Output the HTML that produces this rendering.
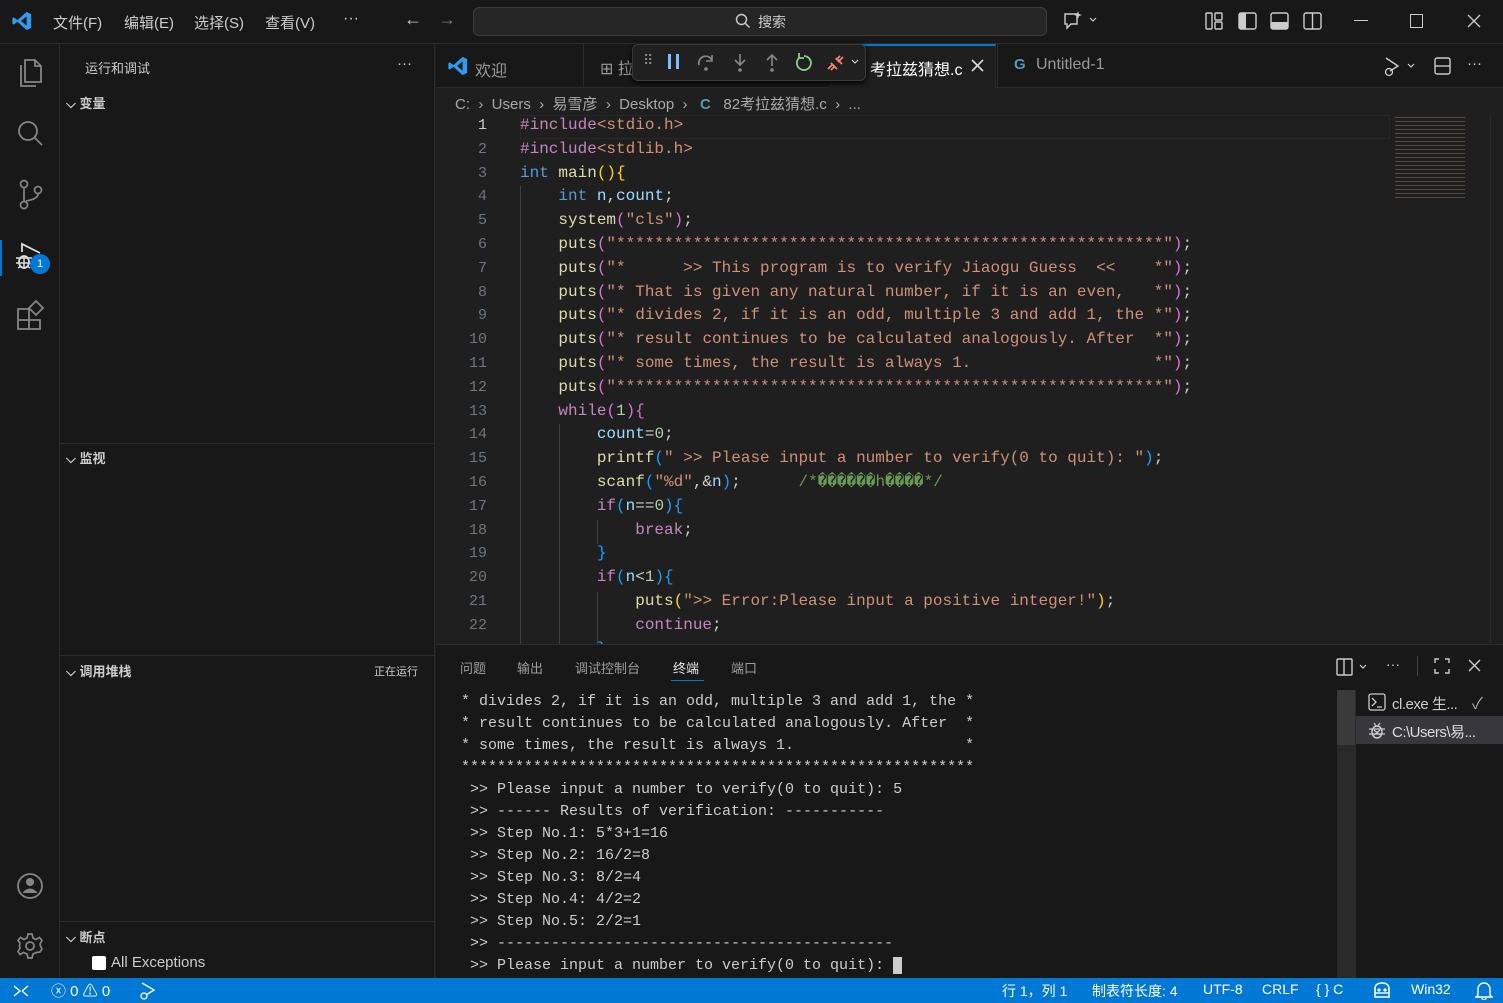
<!DOCTYPE html>
<html><head><meta charset="utf-8"><style>
*{margin:0;padding:0;box-sizing:border-box}
html,body{width:1503px;height:1003px;overflow:hidden}
body{background:#1f1f1f;position:relative;font-family:"Liberation Sans","Noto Sans CJK SC",sans-serif;color:#ccc;font-size:14px}
.a{position:absolute}
.mono{font-family:"Liberation Mono","Noto Sans CJK SC",monospace}
.mono div{white-space:pre}
.code div{height:23.8px;line-height:23.8px;font-size:16px}
.ln div{height:23.8px;line-height:23.8px;font-size:15px;text-align:right;color:#6e7681}
.k{color:#569cd6}.f{color:#dcdcaa}.s{color:#ce9178}.n{color:#b5cea8}.c{color:#c586c0}.v{color:#9cdcfe}.cm{color:#6a9955}.b1{color:#ffd700}.b2{color:#da70d6}.b3{color:#179fff}
.term div{height:22px;line-height:22px;font-size:15px;color:#ccc}
svg{position:absolute}
</style></head><body>
<!-- title bar -->
<div class="a" style="left:0;top:0;width:1503px;height:44px;background:#181818;border-bottom:1px solid #2b2b2b"></div>
<svg style="left:11px;top:10px" width="22" height="22" viewBox="0 0 24 24"><path d="M17 2 L22 4.5 V19.5 L17 22 L7 13 L3 16 L1.5 15 V9 L3 8 L7 11 Z M17 7 L11 12 L17 17 Z" fill="#2f9af0"/></svg>
<div class="a" style="left:53px;top:12px;font-size:15px">文件(F)</div>
<div class="a" style="left:124px;top:12px;font-size:15px">编辑(E)</div>
<div class="a" style="left:194px;top:12px;font-size:15px">选择(S)</div>
<div class="a" style="left:265px;top:12px;font-size:15px">查看(V)</div>
<div class="a" style="left:343px;top:10px;font-size:16px">···</div>
<div class="a" style="left:404px;top:9px;font-size:18px;color:#ccc">←</div>
<div class="a" style="left:438px;top:9px;font-size:18px;color:#777">→</div>
<div class="a" style="left:473px;top:7px;width:574px;height:29px;background:#262626;border:1px solid #3c3c3c;border-radius:6px"></div>
<svg style="left:735px;top:13px" width="16" height="16" viewBox="0 0 16 16"><circle cx="6.5" cy="6.5" r="5" stroke="#ccc" stroke-width="1.4" fill="none"/><path d="M10 10 L14.5 14.5" stroke="#ccc" stroke-width="1.4"/></svg>
<div class="a" style="left:758px;top:12px;font-size:14px">搜索</div>
<svg style="left:1062px;top:10px" width="40" height="22" viewBox="0 0 40 22"><path d="M3 4 H15 V14 H9 L5 18 V14 H3 Z" stroke="#ccc" stroke-width="1.4" fill="none"/><path d="M16 1 L17 4 L20 5 L17 6 L16 9 L15 6 L12 5 L15 4Z" fill="#ccc"/><path d="M28 8 L31 11 L34 8" stroke="#ccc" stroke-width="1.2" fill="none"/></svg>
<svg style="left:1205px;top:12px" width="120" height="20" viewBox="0 0 120 20"><rect x="1" y="1" width="6" height="16" rx="1" stroke="#ccc" fill="none" stroke-width="1.4"/><rect x="10" y="1" width="7" height="7" rx="1" stroke="#ccc" fill="none" stroke-width="1.4"/><rect x="10" y="10" width="7" height="7" rx="1" stroke="#ccc" fill="none" stroke-width="1.4"/><rect x="34" y="1" width="17" height="16" rx="2" stroke="#ccc" fill="none" stroke-width="1.4"/><rect x="34" y="1" width="7" height="16" fill="#ccc"/><rect x="66" y="1" width="17" height="16" rx="2" stroke="#ccc" fill="none" stroke-width="1.4"/><rect x="66" y="10" width="17" height="7" fill="#ccc"/><rect x="99" y="1" width="17" height="16" rx="2" stroke="#ccc" fill="none" stroke-width="1.4"/><path d="M107.5 1 V17" stroke="#ccc" stroke-width="1.4"/></svg>
<div class="a" style="left:1354px;top:20px;width:14px;height:1px;background:#ccc"></div>
<div class="a" style="left:1410px;top:14px;width:13px;height:14px;border:1px solid #ccc"></div>
<svg style="left:1467px;top:14px" width="14" height="14"><path d="M1 1 L13 13 M13 1 L1 13" stroke="#ccc" stroke-width="1.3"/></svg>

<!-- activity bar -->
<div class="a" style="left:0;top:44px;width:60px;height:934px;background:#181818;border-right:1px solid #2b2b2b"></div>
<svg style="left:16px;top:57px" width="28" height="32" viewBox="0 0 28 32"><path d="M9 3 H19 L25 9 V25 H9 Z M19 3 V9 H25" stroke="#858585" stroke-width="1.8" fill="none"/><path d="M5 8 V29 H20" stroke="#858585" stroke-width="1.8" fill="none"/></svg>
<svg style="left:16px;top:119px" width="28" height="30" viewBox="0 0 28 30"><circle cx="12" cy="12" r="9" stroke="#858585" stroke-width="1.8" fill="none"/><path d="M18.5 18.5 L26 26" stroke="#858585" stroke-width="1.8"/></svg>
<svg style="left:16px;top:179px" width="28" height="32" viewBox="0 0 28 32"><circle cx="8" cy="5" r="3.5" stroke="#858585" stroke-width="1.7" fill="none"/><circle cx="8" cy="26" r="3.5" stroke="#858585" stroke-width="1.7" fill="none"/><circle cx="22" cy="11" r="3.5" stroke="#858585" stroke-width="1.7" fill="none"/><path d="M8 9 V22 M22 15 Q22 20 10 22" stroke="#858585" stroke-width="1.7" fill="none"/></svg>
<div class="a" style="left:0;top:240px;width:2px;height:36px;background:#0078d4"></div>
<svg style="left:13px;top:241px" width="34" height="30" viewBox="0 0 34 30"><path d="M9 11 V3 L27 12" stroke="#ddd" stroke-width="1.8" fill="none"/><ellipse cx="11" cy="21" rx="5" ry="6" stroke="#ddd" stroke-width="1.8" fill="none"/><path d="M3 17 H19 M3 22 H19 M5 27 L8 25 M17 27 L14 25 M11 15 V27" stroke="#ddd" stroke-width="1.5"/></svg>
<div class="a" style="left:30px;top:254px;width:20px;height:20px;border-radius:50%;background:#0078d4;color:#fff;font-size:11px;text-align:center;line-height:20px">1</div>
<svg style="left:16px;top:298px" width="30" height="32" viewBox="0 0 30 32"><path d="M2 11 H13 V22 H2 Z M2 22 H13 V31 H2 Z M13 22 H24 V31 H13 Z" stroke="#858585" stroke-width="1.8" fill="none"/><path d="M20 3 L27 10 L20 17 L13 10 Z" stroke="#858585" stroke-width="1.8" fill="none"/></svg>
<svg style="left:16px;top:872px" width="28" height="28" viewBox="0 0 28 28"><circle cx="14" cy="14" r="12" stroke="#858585" stroke-width="1.8" fill="none"/><circle cx="14" cy="10" r="4" fill="#858585"/><path d="M7 20 Q14 13 21 20 V21 H7 Z" fill="#858585"/></svg>
<svg style="left:16px;top:932px" width="28" height="28" viewBox="0 0 28 28"><circle cx="14" cy="14" r="4" stroke="#858585" stroke-width="1.8" fill="none"/><path d="M12 2 H16 L17 6 L20 7.5 L23.5 5.5 L26 8.5 L24 12 L24.5 14 L26 17 L24 20 L20.5 20.5 L17 22 L16 26 H12 L11 22 L7.5 20.5 L4 22.5 L2 19.5 L4 16 L3.5 14 L4 11 L2 8.5 L4.5 5.5 L8 7.5 L11 6 Z" stroke="#858585" stroke-width="1.7" fill="none"/></svg>

<!-- sidebar -->
<div class="a" style="left:60px;top:44px;width:375px;height:934px;background:#181818;border-right:1px solid #2b2b2b"></div>
<div class="a" style="left:85px;top:58px;font-size:13px;color:#ccc">运行和调试</div>
<div class="a" style="left:397px;top:55px;font-size:15px">···</div>
<div class="a" style="left:66px;top:93px;font-size:13px;font-weight:bold;color:#ccc">⌵ 变量</div>
<div class="a" style="left:60px;top:443px;width:375px;height:1px;background:#2b2b2b"></div>
<div class="a" style="left:66px;top:448px;font-size:13px;font-weight:bold">⌵ 监视</div>
<div class="a" style="left:60px;top:655px;width:375px;height:1px;background:#2b2b2b"></div>
<div class="a" style="left:66px;top:661px;font-size:13px;font-weight:bold">⌵ 调用堆栈</div>
<div class="a" style="left:374px;top:663px;font-size:11px;color:#ccc">正在运行</div>
<div class="a" style="left:60px;top:921px;width:375px;height:1px;background:#2b2b2b"></div>
<div class="a" style="left:66px;top:927px;font-size:13px;font-weight:bold">⌵ 断点</div>
<div class="a" style="left:92px;top:956px;width:14px;height:14px;background:#fff;border-radius:2px"></div>
<div class="a" style="left:111px;top:954px;font-size:15px;color:#ccc">All Exceptions</div>

<!-- tabs -->
<div class="a" style="left:436px;top:44px;width:1067px;height:44px;background:#181818;border-bottom:1px solid #2b2b2b"></div>
<div class="a" style="left:436px;top:44px;width:148px;height:43px;border-right:1px solid #2b2b2b"></div>
<svg style="left:447px;top:55px" width="22" height="22" viewBox="0 0 24 24"><path d="M17 2 L22 4.5 V19.5 L17 22 L7 13 L3 16 L1.5 15 V9 L3 8 L7 11 Z M17 7 L11 12 L17 17 Z" fill="#2f9af0"/></svg>
<div class="a" style="left:475px;top:57px;font-size:16px;color:#999">欢迎</div>
<div class="a" style="left:600px;top:55px;font-size:16px;color:#999">⊞ 拉</div>
<div class="a" style="left:830px;top:44px;width:166px;height:44px;background:#1f1f1f;border-top:2px solid #0078d4;border-right:1px solid #2b2b2b"></div>
<div class="a" style="left:870px;top:56px;font-size:16px;color:#fff">考拉兹猜想.c</div>
<svg style="left:971px;top:59px" width="13" height="13"><path d="M1 1 L12 12 M12 1 L1 12" stroke="#ddd" stroke-width="1.6"/></svg>
<div class="a" style="left:1014px;top:56px;font-size:15px;color:#519aba;font-weight:bold">G</div>
<div class="a" style="left:1036px;top:56px;font-size:16px;color:#999">Untitled-1</div>
<div class="a" style="left:997px;top:44px;width:1px;height:44px;background:#2b2b2b"></div>
<svg style="left:1382px;top:56px" width="40" height="22" viewBox="0 0 40 22"><path d="M4 2 L16 10 L8 15" stroke="#ccc" stroke-width="1.4" fill="none"/><circle cx="7" cy="16" r="3.5" stroke="#ccc" stroke-width="1.3" fill="none"/><path d="M26 8 L29 11 L32 8" stroke="#ccc" stroke-width="1.2" fill="none"/></svg>
<svg style="left:1433px;top:56px" width="20" height="20"><rect x="2" y="2" width="15" height="16" rx="2" stroke="#ccc" stroke-width="1.4" fill="none"/><path d="M2 10 H17" stroke="#ccc" stroke-width="1.4"/></svg>
<div class="a" style="left:1467px;top:55px;font-size:15px">···</div>
<!-- debug toolbar -->
<div class="a" style="left:632px;top:44px;width:234px;height:37px;background:#202020;border:1px solid #3c3c3c;border-radius:6px;box-shadow:0 2px 6px #000"></div>
<div class="a" style="left:643px;top:52px;font-size:14px;color:#888">⠿</div>
<div class="a" style="left:668px;top:54px;width:3px;height:15px;background:#75beff"></div>
<div class="a" style="left:676px;top:54px;width:3px;height:15px;background:#75beff"></div>
<svg style="left:696px;top:52px" width="22" height="22"><path d="M3 13 A7 7 0 0 1 16 8 M16 3 V9 H10" stroke="#888" stroke-width="1.6" fill="none"/><circle cx="10" cy="17" r="1.8" fill="#888"/></svg>
<svg style="left:730px;top:52px" width="20" height="22"><path d="M10 2 V13 M5 8 L10 13 L15 8" stroke="#888" stroke-width="1.6" fill="none"/><circle cx="10" cy="18" r="1.8" fill="#888"/></svg>
<svg style="left:762px;top:52px" width="20" height="22"><path d="M10 14 V3 M5 8 L10 3 L15 8" stroke="#888" stroke-width="1.6" fill="none"/><circle cx="10" cy="18" r="1.8" fill="#888"/></svg>
<svg style="left:793px;top:52px" width="22" height="22"><path d="M6 6 A7 7 0 1 0 11 4 M6 1 V6 H11" stroke="#89d185" stroke-width="1.8" fill="none"/></svg>
<svg style="left:825px;top:52px" width="40" height="22"><path d="M3 17 L8 12 M10 14 L6 18 M13 10 L18 5 M11 8 L15 4" stroke="#f48771" stroke-width="1.7" fill="none"/><path d="M6 11 L12 17 M11 6 L17 12" stroke="#f48771" stroke-width="1.7"/><path d="M27 8 L30 11 L33 8" stroke="#ccc" stroke-width="1.2" fill="none"/></svg>

<!-- breadcrumb -->
<div class="a" style="left:455px;top:93px;font-size:15px;color:#a9a9a9;white-space:pre">C:  ›  Users  ›  易雪彦  ›  Desktop  ›   <b style="color:#519aba">C</b>   82考拉兹猜想.c  ›  ...</div>

<!-- code -->
<div class="a" style="left:520px;top:115px;width:870px;height:24px;border:1px solid #282828"></div>
<div class="a ln mono" style="left:455px;top:114px;width:32px"><div style="color:#ccc">1</div><div>2</div><div>3</div><div>4</div><div>5</div><div>6</div><div>7</div><div>8</div><div>9</div><div>10</div><div>11</div><div>12</div><div>13</div><div>14</div><div>15</div><div>16</div><div>17</div><div>18</div><div>19</div><div>20</div><div>21</div><div>22</div></div>
<div class="a" style="left:520px;top:186px;width:1px;height:458px;background:#404040"></div>
<div class="a" style="left:559px;top:424px;width:1px;height:220px;background:#404040"></div>
<div class="a" style="left:597px;top:520px;width:1px;height:24px;background:#404040"></div>
<div class="a" style="left:597px;top:592px;width:1px;height:52px;background:#404040"></div>
<div class="a code mono" style="left:520px;top:114px;color:#ccc;height:530px;overflow:hidden;width:870px"><div><span class="c">#include</span><span class="s">&lt;stdio.h&gt;</span></div><div><span class="c">#include</span><span class="s">&lt;stdlib.h&gt;</span></div><div><span class="k">int</span> <span class="f">main</span><span class="b1">(){</span></div><div>    <span class="k">int</span> <span class="v">n</span>,<span class="v">count</span>;</div><div>    <span class="f">system</span><span class="b2">(</span><span class="s">"cls"</span><span class="b2">)</span>;</div><div>    <span class="f">puts</span><span class="b2">(</span><span class="s">"*********************************************************"</span><span class="b2">)</span>;</div><div>    <span class="f">puts</span><span class="b2">(</span><span class="s">"*      &gt;&gt; This program is to verify Jiaogu Guess  &lt;&lt;    *"</span><span class="b2">)</span>;</div><div>    <span class="f">puts</span><span class="b2">(</span><span class="s">"* That is given any natural number, if it is an even,   *"</span><span class="b2">)</span>;</div><div>    <span class="f">puts</span><span class="b2">(</span><span class="s">"* divides 2, if it is an odd, multiple 3 and add 1, the *"</span><span class="b2">)</span>;</div><div>    <span class="f">puts</span><span class="b2">(</span><span class="s">"* result continues to be calculated analogously. After  *"</span><span class="b2">)</span>;</div><div>    <span class="f">puts</span><span class="b2">(</span><span class="s">"* some times, the result is always 1.                   *"</span><span class="b2">)</span>;</div><div>    <span class="f">puts</span><span class="b2">(</span><span class="s">"*********************************************************"</span><span class="b2">)</span>;</div><div>    <span class="c">while</span><span class="b2">(</span><span class="n">1</span><span class="b2">){</span></div><div>        <span class="v">count</span>=<span class="n">0</span>;</div><div>        <span class="f">printf</span><span class="b3">(</span><span class="s">" &gt;&gt; Please input a number to verify(0 to quit): "</span><span class="b3">)</span>;</div><div>        <span class="f">scanf</span><span class="b3">(</span><span class="s">"%d"</span>,&amp;<span class="v">n</span><span class="b3">)</span>;      <span class="cm">/*������h����*/</span></div><div>        <span class="c">if</span><span class="b3">(</span><span class="v">n</span>==<span class="n">0</span><span class="b3">){</span></div><div>            <span class="c">break</span>;</div><div>        <span class="b3">}</span></div><div>        <span class="c">if</span><span class="b3">(</span><span class="v">n</span>&lt;<span class="n">1</span><span class="b3">){</span></div><div>            <span class="f">puts</span><span class="b1">(</span><span class="s">"&gt;&gt; Error:Please input a positive integer!"</span><span class="b1">)</span>;</div><div>            <span class="c">continue</span>;</div><div>        <span class="b3">}</span></div></div>
<!-- minimap -->
<div class="a" style="left:1395px;top:115px;width:70px;height:85px;opacity:.5;background:repeating-linear-gradient(#1f1f1f 0 2px,#8a7a6a 2px 3px,#1f1f1f 3px 4px)"></div>
<div class="a" style="left:1490px;top:115px;width:13px;height:528px;border-left:1px solid #2b2b2b"></div>

<!-- panel -->
<div class="a" style="left:436px;top:644px;width:1067px;height:334px;background:#181818;border-top:1px solid #2b2b2b"></div>
<div class="a" style="left:460px;top:658px;font-size:13px;color:#9d9d9d">问题</div>
<div class="a" style="left:517px;top:658px;font-size:13px;color:#9d9d9d">输出</div>
<div class="a" style="left:575px;top:658px;font-size:13px;color:#9d9d9d">调试控制台</div>
<div class="a" style="left:673px;top:658px;font-size:13px;color:#e7e7e7">终端</div>
<div class="a" style="left:671px;top:680px;width:33px;height:1px;background:#0078d4"></div>
<div class="a" style="left:731px;top:658px;font-size:13px;color:#9d9d9d">端口</div>
<svg style="left:1335px;top:657px" width="40" height="20"><rect x="2" y="2" width="15" height="16" rx="1" stroke="#ccc" stroke-width="1.4" fill="none"/><path d="M9 2 V18" stroke="#ccc" stroke-width="1.4"/><path d="M25 8 L28 11 L31 8" stroke="#ccc" stroke-width="1.2" fill="none"/></svg>
<div class="a" style="left:1386px;top:656px;font-size:14px">···</div>
<div class="a" style="left:1417px;top:656px;width:1px;height:20px;background:#444"></div>
<svg style="left:1434px;top:658px" width="16" height="16"><path d="M1 5 V1 H5 M11 1 H15 V5 M15 11 V15 H11 M5 15 H1 V11" stroke="#ccc" stroke-width="1.4" fill="none"/></svg>
<svg style="left:1468px;top:659px" width="13" height="13"><path d="M1 1 L12 12 M12 1 L1 12" stroke="#ccc" stroke-width="1.4"/></svg>
<div class="a term mono" style="left:461px;top:691px"><div>* divides 2, if it is an odd, multiple 3 and add 1, the *</div><div>* result continues to be calculated analogously. After  *</div><div>* some times, the result is always 1.                   *</div><div>*********************************************************</div><div> &gt;&gt; Please input a number to verify(0 to quit): 5</div><div> &gt;&gt; ------ Results of verification: -----------</div><div> &gt;&gt; Step No.1: 5*3+1=16</div><div> &gt;&gt; Step No.2: 16/2=8</div><div> &gt;&gt; Step No.3: 8/2=4</div><div> &gt;&gt; Step No.4: 4/2=2</div><div> &gt;&gt; Step No.5: 2/2=1</div><div> &gt;&gt; --------------------------------------------</div><div> &gt;&gt; Please input a number to verify(0 to quit): <span style="background:#ccc"> </span></div></div>
<div class="a" style="left:1337px;top:690px;width:18px;height:288px;background:#2a2a2a"></div>
<div class="a" style="left:1337px;top:690px;width:18px;height:55px;background:#3a3a3a"></div>
<div class="a" style="left:1355px;top:690px;width:1px;height:288px;background:#2b2b2b"></div>
<svg style="left:1368px;top:693px" width="18" height="18"><rect x="1" y="1" width="16" height="16" rx="2" stroke="#ccc" stroke-width="1.3" fill="none"/><path d="M4 5 L8 9 L4 13 M9 14 H14" stroke="#ccc" stroke-width="1.3" fill="none"/></svg>
<div class="a" style="left:1392px;top:693px;font-size:15px;color:#ccc;letter-spacing:-.5px">cl.exe 生...</div>
<div class="a" style="left:1472px;top:690px;font-size:16px;color:#aaa">✓</div>
<div class="a" style="left:1356px;top:716px;width:147px;height:28px;background:#37373d"></div>
<svg style="left:1368px;top:720px" width="18" height="20" viewBox="0 0 18 20"><ellipse cx="9" cy="12" rx="5" ry="6" stroke="#ccc" stroke-width="1.4" fill="none"/><path d="M1 9 H17 M1 14 H17 M6 3 L8 6 M12 3 L10 6 M6 10 L12 15 M12 10 L6 15" stroke="#ccc" stroke-width="1.2"/></svg>
<div class="a" style="left:1392px;top:721px;font-size:15px;color:#ddd;letter-spacing:-.5px">C:\Users\易...</div>

<!-- status bar -->
<div class="a" style="left:0;top:978px;width:1503px;height:25px;background:#0078d4"></div>
<svg style="left:12px;top:982px" width="18" height="17"><path d="M2 14 L8 9 L2 4 M10 9 L16 4 M10 9 L16 14" stroke="#fff" stroke-width="1.4" fill="none"/></svg>
<div class="a" style="left:51px;top:980px;font-size:15px;color:#fff">ⓧ 0 ⚠ 0</div>
<svg style="left:138px;top:981px" width="20" height="20"><path d="M4 2 L16 9 L8 14" stroke="#fff" stroke-width="1.4" fill="none"/><circle cx="6" cy="15" r="3" stroke="#fff" stroke-width="1.3" fill="none"/></svg>
<div class="a" style="left:1002px;top:981px;font-size:14px;color:#fff">行 1，列 1</div>
<div class="a" style="left:1092px;top:981px;font-size:14px;color:#fff">制表符长度: 4</div>
<div class="a" style="left:1203px;top:981px;font-size:14px;color:#fff">UTF-8</div>
<div class="a" style="left:1262px;top:981px;font-size:14px;color:#fff">CRLF</div>
<div class="a" style="left:1316px;top:981px;font-size:14px;color:#fff">{ } C</div>
<svg style="left:1371px;top:980px" width="22" height="20"><path d="M4 17 V9 Q4 3 11 3 Q18 3 18 9 V17 Z" stroke="#fff" stroke-width="1.6" fill="none"/><circle cx="8" cy="10" r="1.6" fill="#fff"/><circle cx="14" cy="10" r="1.6" fill="#fff"/><path d="M4 13 H18" stroke="#fff" stroke-width="1.4"/></svg>
<div class="a" style="left:1411px;top:981px;font-size:14px;color:#fff">Win32</div>
<svg style="left:1475px;top:981px" width="18" height="19"><path d="M3 14 V8 A6 6 0 0 1 15 8 V14 L17 16 H1 Z M7 17 A2 2 0 0 0 11 17" stroke="#fff" stroke-width="1.4" fill="none"/></svg>
</body></html>
